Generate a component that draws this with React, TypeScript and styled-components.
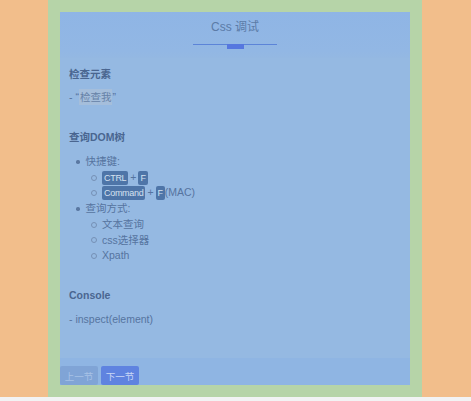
import React from "react";
import styled, { createGlobalStyle } from "styled-components";

const Global = createGlobalStyle`
  html, body { margin: 0; padding: 0; background: #f2f3f4; }
  body { font-family: "Liberation Sans", "Noto Sans CJK SC", sans-serif; }
  * { box-sizing: border-box; }
`;

const MarginBox = styled.div`
  height: 397px;
  width: 471px;
  background: #f2be8b;
  padding: 0 49px 0 48px;
  display: flex;
`;

const PaddingBox = styled.div`
  flex: 1;
  background: #b6d4a8;
  padding: 12px;
  display: flex;
`;

const Card = styled.div`
  flex: 1;
  background: #95b9e2;
  display: flex;
  flex-direction: column;
  color: #55749f;
`;

const Header = styled.div`
  height: 46px;
  background: linear-gradient(#8fb5e5, #92b7e4 85%, #94b8e2);
  display: flex;
  flex-direction: column;
  align-items: center;
  padding-top: 8px;
`;

const Title = styled.div`
  font-size: 12px;
  line-height: 14px;
  color: #5b7ba7;
`;

const TabLine = styled.div`
  margin-top: 10px;
  width: 84px;
  border-top: 1px solid #5c84d8;
  display: flex;
  justify-content: center;
`;

const TabIndicator = styled.div`
  margin-top: -1px;
  width: 17px;
  height: 5px;
  background: #5677df;
`;

const Body = styled.div`
  flex: 1;
  padding: 0 9px;
  font-size: 10.5px;
`;

const Heading = styled.div<{ $mt: number }>`
  margin-top: ${(p) => p.$mt}px;
  line-height: 16px;
  font-weight: bold;
  color: #4a6690;
`;

const Para = styled.div<{ $mt: number }>`
  margin-top: ${(p) => p.$mt}px;
  line-height: 16px;
`;

const Mark = styled.span`
  background: #a5bedb;
  color: #6682a8;
  padding: 2px 1px;
`;

const List = styled.ul<{ $mt?: number; $nested?: boolean }>`
  list-style: none;
  margin: ${(p) => p.$mt ?? 0}px 0 0 0;
  padding: 0 0 0 ${(p) => (p.$nested ? 14 : 6)}px;
`;

const Item = styled.li<{ $nested?: boolean }>`
  line-height: 15.7px;
  & > span.row {
    display: flex;
    align-items: center;
  }
  & > span.row::before {
    content: "";
    flex: none;
    border-radius: 50%;
    ${(p) =>
      p.$nested
        ? "border: 1px solid #7590b5; width: 4px; height: 4px; margin: 0 5px 0 2px;"
        : "background: #5a78a2; width: 3.5px; height: 3.5px; margin: 0 6px 0 1px;"}
  }
`;

const Kbd = styled.span`
  display: inline-block;
  background: #4e75a8;
  color: #d5e1f0;
  font-size: 9px;
  letter-spacing: -0.3px;
  line-height: 14px;
  padding: 0 2px;
  border-radius: 2px;
`;

const Plus = styled.span`
  margin: 0 2px;
`;

const Footer = styled.div`
  height: 27px;
  background: #8fb5e3;
  display: flex;
  gap: 3px;
  padding-top: 8px;
`;

const Btn = styled.div<{ $primary?: boolean }>`
  width: 38px;
  height: 19px;
  border-radius: 2px;
  font-size: 9.5px;
  display: flex;
  align-items: center;
  justify-content: center;
  background: ${(p) => (p.$primary ? "#5f83e0" : "#80a4d6")};
  color: ${(p) => (p.$primary ? "#c9d7f6" : "#a8c2e6")};
`;

export default function App() {
  return (
    <>
      <Global />
      <MarginBox>
        <PaddingBox>
          <Card>
            <Header>
              <Title>Css 调试</Title>
              <TabLine>
                <TabIndicator />
              </TabLine>
            </Header>
            <Body>
              <Heading $mt={8}>检查元素</Heading>
              <Para $mt={7}>
                - “<Mark>检查我</Mark>”
              </Para>
              <Heading $mt={24}>查询DOM树</Heading>
              <List $mt={9}>
                <Item>
                  <span className="row">快捷键:</span>
                  <List $nested>
                    <Item $nested>
                      <span className="row">
                        <Kbd>CTRL</Kbd>
                        <Plus>+</Plus>
                        <Kbd>F</Kbd>
                      </span>
                    </Item>
                    <Item $nested>
                      <span className="row">
                        <Kbd>Command</Kbd>
                        <Plus>+</Plus>
                        <Kbd>F</Kbd>(MAC)
                      </span>
                    </Item>
                  </List>
                </Item>
                <Item>
                  <span className="row">查询方式:</span>
                  <List $nested>
                    <Item $nested>
                      <span className="row">文本查询</span>
                    </Item>
                    <Item $nested>
                      <span className="row">css选择器</span>
                    </Item>
                    <Item $nested>
                      <span className="row">Xpath</span>
                    </Item>
                  </List>
                </Item>
              </List>
              <Heading $mt={23}>Console</Heading>
              <Para $mt={8}>- inspect(element)</Para>
            </Body>
            <Footer>
              <Btn>上一节</Btn>
              <Btn $primary>下一节</Btn>
            </Footer>
          </Card>
        </PaddingBox>
      </MarginBox>
    </>
  );
}
